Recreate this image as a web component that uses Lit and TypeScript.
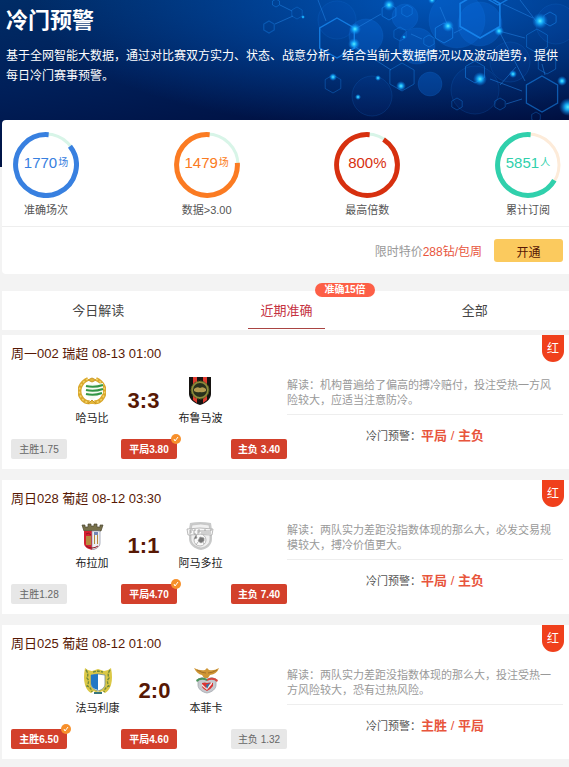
import { LitElement, html, css, svg, nothing } from "lit";
import { customElement, property, state } from "lit/decorators.js";
import { classMap } from "lit/directives/class-map.js";

const shared = css`
  * { box-sizing: border-box; }
  button { font: inherit; border: 0; margin: 0; padding: 0; background: none; cursor: pointer; }
`;

const hexagon = (cx: number, cy: number, r: number) =>
  Array.from({ length: 6 }, (_, i) => {
    const a = ((i * 60 - 90) * Math.PI) / 180;
    return `${(cx + r * Math.cos(a)).toFixed(1)},${(cy + r * Math.sin(a)).toFixed(1)}`;
  }).join(" ");

/* [centre x, centre y, radius, opacity, stroke width] */
const HEXES: number[][] = [
  [276, 3, 4, 0.4, 1], [269, 27, 6, 0.35, 1.2], [337, 38, 20, 0.75, 1.4], [389, 12, 8, 0.5, 1],
  [407, 11, 6, 0.4, 1], [297, 13, 6, 0.3, 1], [400, 34, 7, 0.35, 1], [444, 33, 10, 0.6, 1],
  [429, 41, 6, 0.4, 1], [480, 15, 23, 0.8, 1.6], [550, 19, 7, 0.5, 1], [537, 41, 12, 0.4, 1],
  [402, 77, 14, 0.4, 1], [333, 84, 9, 0.35, 1], [475, 72, 11, 0.5, 1], [542, 94, 18, 0.55, 1.3],
  [457, 104, 6, 0.35, 1], [500, 104, 6, 0.35, 1], [547, 64, 10, 0.4, 1], [498, -14, 19, 0.7, 1.4],
  [536, 117, 5, 0.3, 1],
];
const GLOWS: number[][] = [
  [389, 5, 6], [355, 29, 6], [354, 44, 6], [448, 26, 6], [499, 31, 5], [540, 21, 8], [401, 86, 5],
  [333, 77, 4], [480, 79, 7], [513, 74, 4], [562, 81, 5], [568, 107, 9], [358, 97, 3], [378, 78, 3],
  [303, 17, 2], [404, 37, 2], [432, 0, 4],
];
const DISCS: number[][] = [
  [405, 17, 13], [457, 20, 28], [366, 36, 17], [417, 46, 18], [430, 84, 12], [480, 24, 22],
  [475, 90, 24], [372, 96, 20], [556, 24, 20], [337, 20, 19], [510, 62, 20],
];

const backdrop = html`<svg class="molecules" viewBox="220 0 349 120" aria-hidden="true">
  <defs><radialGradient id="glow">
    <stop offset="0" stop-color="#5df0ff"></stop>
    <stop offset=".35" stop-color="#18b4ff" stop-opacity=".9"></stop>
    <stop offset="1" stop-color="#0878e8" stop-opacity="0"></stop>
  </radialGradient></defs>
  ${DISCS.map(([x, y, r], i) => svg`<circle cx=${x} cy=${y} r=${r} fill="#0a6ce0" fill-opacity=${i < 6 ? 0.32 : 0.08} stroke="#1a7ae0" stroke-opacity=".18"/>`)}
  <path d="M280 5l12 6M275 24l18-8M326 21L318 0M355 29L381 14M354 46l37 24M448 26L440 7M499 31l26 7M503 4l30 14M536 21L520 0M490 79l32 12M545 75l-3-11M454 33l8-4M516 67l-16 18M411 34l11 5M499 31l26 50M506 104l16-5"
    fill="none" stroke="#2587ea" stroke-opacity=".5"></path>
  ${HEXES.map(([x, y, r, o, w]) => svg`<polygon points=${hexagon(x, y, r)} fill="none" stroke="#1a8cf5" stroke-opacity=${o} stroke-width=${w}/>`)}
  ${GLOWS.map(([x, y, r]) => svg`<circle cx=${x} cy=${y} r=${r} fill="url(#glow)"/>`)}
</svg>`;

const CRESTS: Record<string, unknown> = {
  hammarby: svg`
    <path d="M10 2C3 5-1 13 3 20c2 4 6 6 9 5M18 2c7 3 11 11 7 18-2 4-6 6-9 5" fill="none" stroke="#d9a72c" stroke-width="4"/>
    <path d="M10 2C3 5-1 13 3 20c2 4 6 6 9 5M18 2c7 3 11 11 7 18-2 4-6 6-9 5" fill="none" stroke="#f3d468" stroke-width="1.5" stroke-dasharray="2 2"/>
    <path d="M10 3l4-2 4 2-4 2zM10 27l4-4 4 4" fill="#e3b53b" stroke="#c99622" stroke-width="1"/>
    <path d="M8 7q6-1 10 0l7-1v11l-5 1-6 5-6-5z" fill="#f7fbf2"/>
    <path d="M8 9q8 2 17-1M8 13q8 2 17-1M8 17q8 2 16-1" fill="none" stroke="#349646" stroke-width="2"/>`,
  brommapojkarna: svg`
    <path d="M3 0h22v17c0 5-5 9-11 11C8 26 3 22 3 17z" fill="#161311"/>
    <path d="M7 0h4v26l-4-3zM17 0h4v23l-4 3z" fill="#e03a2e"/>
    <circle cx="14" cy="13" r="8" fill="#28301c" stroke="#8c8a3b" stroke-width="2"/>
    <circle cx="14" cy="13" r="9" fill="none" stroke="#4d5b25" stroke-dasharray="2 1"/>
    <path d="M8 12q3-3 6-1 3-2 6 1v2q-3 2-6 1-3 1-6-1z" fill="#b39a50"/>`,
  braga: svg`
    <path d="M4 3h3v2h3V2h3v2h3V2h3v3h3V3h3l-2 6H6z" fill="#77704a" stroke="#4b4630" stroke-width=".7"/>
    <path d="M6 9h16v12c0 4-4 6-8 7-4-1-8-3-8-7z" fill="#d4202f"/>
    <path d="M14 9h8v12c0 4-4 6-8 7z" fill="#eef0f3" stroke="#8a91a3" stroke-width=".7"/>
    <path d="M8 14h5v9H8zM16 13h1v9h-1zM19 13h1v9h-1z" fill="#b58b3e"/>
    <path d="M16 10h4v3h-4z" fill="#7485b5"/>
    <path d="M8 12q3-2 5 1M8 24q6 4 12 0" fill="none" stroke="#8e1824"/>`,
  amadora: svg`
    <path d="M4 1q10-2 21 0l1 7v9c0 6-5 10-11 11C8 27 3 22 3 17V7z" fill="#c9caca"/>
    <path d="M6 3q9-2 17 0l1 6v8c0 5-4 8-9 9-6-1-10-5-10-9V8z" fill="#f0f0f0" stroke="#bbb" stroke-width=".7"/>
    <path d="M1 7q13-2 26 0l-1 6q-12-1-24 0z" fill="#f8f8f8" stroke="#aaa" stroke-width=".8"/>
    <path d="M4 12V8h3M4 10h2M10 8H8v4h2M12 12V8h2v2h-2M16 8v4M18 12V8h2v4M22 8v4M24 12V8h2" fill="none" stroke="#959595" stroke-width=".8"/>
    <circle cx="14" cy="18" r="6" fill="#fafafa" stroke="#bbb"/>
    <path d="M14 15l4 1v3l-3 2-3-2zM8 17l3-1-1-3M10 23l2-3M18 22l-1-2" fill="#777" stroke="#999" stroke-width=".7"/>`,
  famalicao: svg`
    <path d="M1 1q3 3 7 3l6-2 6 2q4 0 7-3 2 10 0 17-2 6-6 8l-3-2-2 2-2-2-2 2-2-2-3 2q-4-2-6-8Q-1 11 1 1z" fill="#dbc846"/>
    <path d="M2 3q3 4 1 8 3 3 0 8 4 1 5 6M26 3q-3 4-1 8-3 3 0 8-4 1-5 6M9 5l5-1 5 1" fill="none" stroke="#738a3c" stroke-width="1.4" stroke-dasharray="3 1"/>
    <path d="M7 8q7-2 14 0v9c0 4-4 6-7 7-3-1-7-3-7-7z" fill="#fff" stroke="#718d89" stroke-width=".8"/>
    <path d="M7 8q4-1 7-1v16c-4-1-7-3-7-7z" fill="#2277c4"/>
    <path d="M10 25h8v2h-8z" fill="#39777b"/>`,
  benfica: svg`
    <path d="M2 1q6 3 11 2l2-2 2 2q5 1 10-2-2 6-9 7l-2 3h-4l-2-3Q5 7 2 1z" fill="#cf9635"/>
    <path d="M5 3q5 3 9 3M25 3q-5 3-9 3" fill="none" stroke="#8c5f22" stroke-width=".7"/>
    <path d="M6 12q4-3 9 0 5-3 9 0v6c0 4-4 7-9 8-5-1-9-4-9-8z" fill="#c6c9ce" stroke="#a2a6ac" stroke-width=".8"/>
    <path d="M4 13q5-4 11-1v2q-6-3-10 1z" fill="#4a945c"/><path d="M26 13q-5-4-11-1v2q6-3 10 1z" fill="#d64840"/>
    <path d="M10 16q3-1 5 0 2-1 6 0v3q-2 3-6 5-4-2-5-4z" fill="#db3434"/>
    <path d="M10 17l4 4 6-6v2l-5 6-5-4z" fill="#f2eee8"/><path d="M14 18l4-2-3 6z" fill="#2d74ac"/>`,
};

@customElement("stat-ring")
class StatRing extends LitElement {
  @property() value = "";
  @property() unit = "";
  @property() label = "";
  @property() color = "";
  @property() track = "#d8f5e8";
  @property({ type: Number }) start = 50;

  static styles = [shared, css`
    :host { display: flex; flex-direction: column; align-items: center; width: 66px; }
    .dial { display: grid; place-items: center; height: 66px; width: 66px; }
    .dial > * { grid-area: 1 / 1; }
    .figure { display: flex; align-items: center; gap: 1px; font-size: 15px; line-height: 18px; margin-bottom: 4px; }
    .unit { font-size: 10px; }
    .label { font-size: 11px; line-height: 16px; margin-top: 4px; color: #555; white-space: nowrap; }
  `];

  render() {
    const a = ((this.start - 90) * Math.PI) / 180;
    const b = (-85 * Math.PI) / 180;
    const pt = (r: number, t: number) => `${(33 + r * Math.cos(t)).toFixed(2)} ${(33 + r * Math.sin(t)).toFixed(2)}`;
    return html`
      <div class="dial">
        <svg width="66" height="66" aria-hidden="true" fill="none">
          <circle cx="33" cy="33" r="31" stroke=${this.track} stroke-width="3"></circle>
          <path d="M${pt(30.4, a)}A30.4 30.4 0 1 1 ${pt(30.4, b)}" stroke=${this.color} stroke-width="5"></path>
        </svg>
        <div class="figure" style="color:${this.color}">${this.value}${this.unit ? html`<span class="unit">${this.unit}</span>` : nothing}</div>
      </div>
      <span class="label">${this.label}</span>`;
  }
}

interface Odd { text: string; hot: boolean; hit?: boolean }
interface Match {
  title: string; home: string; away: string; homeCrest: string; awayCrest: string;
  score: string; odds: Odd[]; note: string; picks: [string, string];
}

@customElement("match-card")
class MatchCard extends LitElement {
  @property({ attribute: false }) match!: Match;

  static styles = [shared, css`
    :host { display: block; position: relative; background: #fff; padding: 10px 6px 10px 9px; }
    .title { margin: 0; font-size: 13px; line-height: 18px; font-weight: 400; color: #571804; }
    .ribbon { position: absolute; top: 0; right: 5px; width: 22px; height: 27px; border-radius: 0 0 11px 11px;
      background: #f0401c; color: #fff; font-size: 12px; line-height: 28px; text-align: center; }
    .body { display: grid; grid-template-columns: 1fr 1fr; }
    .teams { display: flex; justify-content: center; align-items: center; gap: 19px; height: 50px; margin-top: 13px; }
    .team { display: flex; flex-direction: column; align-items: center; font-size: 11px; line-height: 16px; gap: 5px; color: #222; }
    .score { font-size: 22px; line-height: 24px; font-weight: 700; color: #571804; }
    .odds { display: flex; justify-content: space-between; margin-top: 13px; }
    .odd { position: relative; width: 56px; height: 20px; line-height: 22px; border-radius: 2px; font-size: 10px;
      text-align: center; background: #e7e7e7; color: #666; white-space: pre; }
    .hot { background: #d3402b; color: #fff; font-weight: 700; }
    .tick { position: absolute; right: -4px; top: -5px; }
    .note { margin: 0; padding: 15px 6px 6px 0; font-size: 11px; line-height: 15px; color: #999; border-bottom: 1px solid #eee; }
    .warn { margin: 0; padding-top: 11px; display: flex; justify-content: center; align-items: center; font-size: 11px;
      line-height: 20px; color: #555; }
    .pick { font-size: 13px; color: #e8553c; white-space: pre; }
  `];

  render() {
    const m = this.match;
    const team = (name: string, crest: string) => html`<div class="team">
      <svg width="28" height="28" viewBox="0 0 28 28" aria-hidden="true">${CRESTS[crest]}</svg>${name}</div>`;
    return html`
      <h2 class="title">${m.title}</h2>
      <span class="ribbon">红</span>
      <div class="body">
        <div>
          <div class="teams">${team(m.home, m.homeCrest)}<strong class="score">${m.score}</strong>${team(m.away, m.awayCrest)}</div>
          <div class="odds">${m.odds.map((o) => html`<div class=${classMap({ odd: true, hot: o.hot })}>${o.text}${o.hit
            ? html`<svg class="tick" width="10" height="10" aria-hidden="true"><circle cx="5" cy="5" r="5" fill="#f7902b"></circle><path d="M3 5l1 2 3-4" fill="none" stroke="#fff"></path></svg>`
            : nothing}</div>`)}</div>
        </div>
        <div>
          <p class="note">${m.note}</p>
          <p class="warn">冷门预警：<span class="pick"><b>${m.picks[0]}</b> / <b>${m.picks[1]}</b></span></p>
        </div>
      </div>`;
  }
}

const MATCHES: Match[] = [
  { title: "周一002 瑞超 08-13 01:00", home: "哈马比", away: "布鲁马波", homeCrest: "hammarby", awayCrest: "brommapojkarna", score: "3:3",
    odds: [{ text: "主胜1.75", hot: false }, { text: "平局3.80", hot: true, hit: true }, { text: "主负 3.40", hot: true }],
    note: "解读：机构普遍给了偏高的搏冷赔付，投注受热一方风险较大，应适当注意防冷。", picks: ["平局", "主负"] },
  { title: "周日028 葡超 08-12 03:30", home: "布拉加", away: "阿马多拉", homeCrest: "braga", awayCrest: "amadora", score: "1:1",
    odds: [{ text: "主胜1.28", hot: false }, { text: "平局4.70", hot: true, hit: true }, { text: "主负 7.40", hot: true }],
    note: "解读：两队实力差距没指数体现的那么大，必发交易规模较大，搏冷价值更大。", picks: ["平局", "主负"] },
  { title: "周日025 葡超 08-12 01:00", home: "法马利康", away: "本菲卡", homeCrest: "famalicao", awayCrest: "benfica", score: "2:0",
    odds: [{ text: "主胜6.50", hot: true, hit: true }, { text: "平局4.60", hot: true }, { text: "主负 1.32", hot: false }],
    note: "解读：两队实力差距没指数体现的那么大，投注受热一方风险较大，恐有过热风险。", picks: ["主胜", "平局"] },
];

@customElement("app-root")
class AppRoot extends LitElement {
  @state() private tab = 1;

  static styles = [shared, css`
    :host { display: block; min-height: 100vh; background: #f3f3f3;
      font-family: "Liberation Sans", "Noto Sans CJK SC", sans-serif; }
    .top { position: relative; background-image:
      radial-gradient(ellipse 70% 110% at 75% 0, rgba(0, 96, 205, .8), transparent),
      linear-gradient(170deg, #002c66 0, #001f59 35%, #000d3c 75%);
      background-size: 100% 120px, 100% 167px; background-repeat: no-repeat; }
    .molecules { position: absolute; right: 0; top: 0; height: 120px; overflow: hidden; }
    .intro { position: relative; padding: 6px 0 0 6px; height: 120px; color: #fff; }
    h1 { margin: 0; font-size: 22px; line-height: 30px; }
    .lead { margin: 10px 0 0; font-size: 12px; line-height: 20px; }
    .panel { position: relative; margin-left: 2px; background: #fff; border-radius: 4px 0 0 4px; }
    .stats { display: flex; justify-content: space-between; padding: 12px 8px 8px 11px; border-bottom: 1px solid #eee; }
    .buy { display: flex; justify-content: flex-end; align-items: center; gap: 12px; padding: 12px 6px; font-size: 12px; color: #999; }
    .price { color: #e8553c; }
    .open { width: 69px; height: 23px; border-radius: 3px; background: #fbca5e; color: #571804; padding-top: 2px; }
    .tabs { display: grid; grid-template-columns: repeat(3, 1fr); margin: 17px 0 5px 2px; padding-left: 2px; background: #fff; }
    .tab { position: relative; height: 38px; margin-bottom: 1px; justify-self: center; width: 77px; font-size: 13px; color: #444;
      border-bottom: 1px solid transparent; }
    .tab.on { color: #c5323f; border-color: #a94442; }
    .badge { position: absolute; top: -8px; right: -50px; width: 60px; height: 14px; border-radius: 7px; background: #fd5f47;
      color: #fff; font-size: 10px; line-height: 14px; font-weight: 700; }
    .list { display: flex; flex-direction: column; gap: 11px; margin-left: 2px; padding-bottom: 7px; }
  `];

  render() {
    return html`
      <header class="top">
        ${backdrop}
        <div class="intro">
          <h1>冷门预警</h1>
          <p class="lead">基于全网智能大数据，通过对比赛双方实力、状态、战意分析，结合当前大数据情况以及波动趋势，提供每日冷门赛事预警。</p>
        </div>
        <section class="panel">
          <div class="stats">
            <stat-ring value="1770" unit="场" label="准确场次" color="#3880e0" start="52"></stat-ring>
            <stat-ring value="1479" unit="场" label="数据>3.00" color="#fb7b22" start="86"></stat-ring>
            <stat-ring value="800%" label="最高倍数" color="#d7300f" start="33"></stat-ring>
            <stat-ring value="5851" unit="人" label="累计订阅" color="#30d0ac" track="#fdebd9" start="120"></stat-ring>
          </div>
          <div class="buy"><span>限时特价<span class="price">288钻/包周</span></span><button class="open">开通</button></div>
        </section>
      </header>
      <nav class="tabs">${["今日解读", "近期准确", "全部"].map((t, i) => html`
        <button class=${classMap({ tab: true, on: this.tab === i })} @click=${() => (this.tab = i)}>${t}${i === 1 ? html`<span class="badge">准确15倍</span>` : nothing}</button>`)}
      </nav>
      <main class="list">${MATCHES.map((m) => html`<match-card .match=${m}></match-card>`)}</main>`;
  }
}
